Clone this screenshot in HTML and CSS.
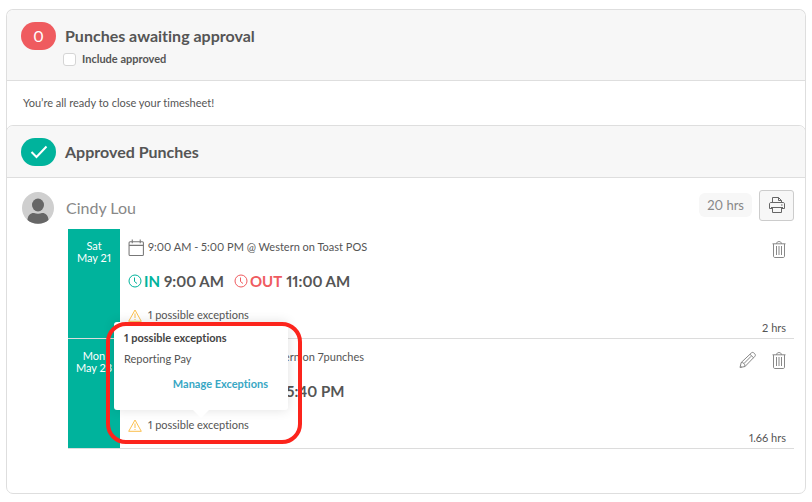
FILE: index.html
```html
<!DOCTYPE html>
<html lang="en">
<head>
  <meta charset="UTF-8" />
  <meta name="viewport" content="width=device-width, initial-scale=1" />
  <title>Timesheet approval</title>
  <link rel="stylesheet" href="styles.css">
</head>
<body>
  <!-- shared icons -->
  <svg class="sprite" aria-hidden="true">
    <symbol id="clock" viewBox="0 0 14 14">
      <circle cx="7" cy="7" r="6" />
      <path d="M6.5 3.5v4l2.5 2" />
    </symbol>
    <symbol id="calendar" viewBox="0 0 16 16">
      <rect x="1" y="2.5" width="13.5" height="13" rx="1" />
      <path d="M1 6h13.5M4 0.5v3.5M11.5 0.5v3.5" />
    </symbol>
    <symbol id="warning" viewBox="0 0 14 13">
      <path d="M7 1L13.3 12.3H0.7zM7 4.5v4.5M7 10v1" />
    </symbol>
    <symbol id="trash" viewBox="0 0 14 17">
      <path d="M0.5 2.8h13M4.5 2.8c0-3 5-3 5 0M1.5 3v12c0 1 .5 1.5 1.5 1.5h8c1 0 1.5-.5 1.5-1.5V3M4.5 5v9M7 5v9M9.5 5v9" />
    </symbol>
    <symbol id="pencil" viewBox="0 0 18 18">
      <path d="M1 16.5l1.2-5L12.5 1.8c1.5-1.5 5 1.8 3.5 3.4L6 15.5zM11 3.3l3.6 3.5M2.2 11.5c2-.3 4 1.5 3.8 4M12.2 5.2L5 12.5M1.3 15l1.5 1.2" />
    </symbol>
  </svg>

  <section class="card">
    <header class="card-head">
      <span class="count count-pending">0</span>
      <div>
        <h2>Punches awaiting approval</h2>
        <label class="include"><input type="checkbox"> Include approved</label>
      </div>
    </header>
    <p class="message">You’re all ready to close your timesheet!</p>
  </section>

  <section class="card card-approved">
    <header class="card-head">
      <span class="count count-done">
        <svg width="18" height="14" viewBox="0 0 18 14"><path d="M1.5 7L6.5 12L16.5 1.5" /></svg>
      </span>
      <h2>Approved Punches</h2>
    </header>

    <div class="employee">
      <svg class="avatar" viewBox="0 0 32 32">
        <circle cx="16" cy="16" r="16" fill="#cfcfcf" />
        <ellipse cx="16" cy="13" rx="6" ry="6.5" fill="#666" />
        <path d="M5.5 28c0-5 4-7.5 6.5-7 2.5 1 5.5 1 8 0 2.5-.5 6.5 2 6.5 7-5.5 5-15.5 5-21 0z" fill="#666" />
      </svg>
      <h3>Cindy Lou</h3>
      <div class="summary">
        <span class="total">20 hrs</span>
        <button class="print" type="button" aria-label="Print">
          <svg width="18" height="18" viewBox="0 0 18 18">
            <path d="M4.5 6.5V1.5h6l3 3v2M10.5 1.5v3h3M4 12.5H1.5V8c0-1 .5-1.5 1.5-1.5h12c1 0 1.5.5 1.5 1.5v4.500H14M4.500 11.500h9v5h-9zM3 11.500h12M13 9h1.500" />
          </svg>
        </button>
      </div>
    </div>

    <div class="punches">
      <article class="punch">
        <time class="day">Sat<br>May 21</time>
        <div class="details">
          <p class="shift"><svg class="icon-calendar"><use href="#calendar" /></svg>9:00 AM - 5:00 PM @ Western on Toast POS</p>
          <p class="times">
            <span class="in"><svg class="icon-clock"><use href="#clock" /></svg>IN</span> <span>9:00 AM</span>
            <span class="out"><svg class="icon-clock"><use href="#clock" /></svg>OUT</span> <span>11:00 AM</span>
          </p>
          <p class="exceptions"><svg class="icon-warning"><use href="#warning" /></svg>1 possible exceptions</p>
        </div>
        <div class="side">
          <div class="actions">
            <button type="button" aria-label="Delete punch"><svg class="icon-trash"><use href="#trash" /></svg></button>
          </div>
          <span>2 hrs</span>
        </div>
      </article>

      <article class="punch">
        <time class="day">Mon<br>May 23</time>
        <div class="details">
          <p class="shift"><svg class="icon-calendar"><use href="#calendar" /></svg>9:00 AM - 5:00 PM @ Western on 7punches</p>
          <p class="times">
            <span class="in"><svg class="icon-clock"><use href="#clock" /></svg>IN</span> <span>4:00 PM</span>
            <span class="out"><svg class="icon-clock"><use href="#clock" /></svg>OUT</span> <span>5:40 PM</span>
          </p>
          <p class="exceptions"><svg class="icon-warning"><use href="#warning" /></svg>1 possible exceptions</p>
          <div class="popover">
            <h4>1 possible exceptions</h4>
            <p>Reporting Pay</p>
            <a href="#">Manage Exceptions</a>
          </div>
          <div class="highlight"></div>
        </div>
        <div class="side">
          <div class="actions">
            <button type="button" aria-label="Edit punch"><svg class="icon-pencil"><use href="#pencil" /></svg></button>
            <button type="button" aria-label="Delete punch"><svg class="icon-trash"><use href="#trash" /></svg></button>
          </div>
          <span>1.66 hrs</span>
        </div>
      </article>
    </div>
  </section>
</body>
</html>
```

FILE: styles.css
```css
* {
  box-sizing: border-box;
}
body {
  margin: 9px 6px;
  background: #fff;
  color: #555;
  font-family: Lato, "Liberation Sans", sans-serif;
  font-size: 11px;
  line-height: 12px;
  font-variant-ligatures: none;
  font-variant-numeric: proportional-nums;
}
h2, h3, h4, p {
  margin: 0;
}
svg {
  fill: none;
  stroke: currentColor;
  flex: none;
}
button {
  padding: 0;
  border: 0;
  background: none;
  color: #888;
  font: inherit;
}
button svg {
  display: block;
}
.sprite {
  position: absolute;
  width: 0;
  height: 0;
}

/* cards */
.card {
  border: 1px solid #dedede;
  border-bottom: 0;
  border-radius: 7px 7px 0 0;
  padding-bottom: 7px;
}
.card-approved {
  margin-top: -7px;
  border-bottom: 1px solid #dedede;
  border-radius: 7px;
  padding-bottom: 44px;
}
.card-head {
  display: flex;
  align-items: flex-start;
  gap: 9px;
  padding: 12px 14px;
  border-bottom: 1px solid #dedede;
  border-radius: 7px 7px 0 0;
  background: #f7f7f7;
}
.card-head h2 {
  font-size: 16px;
  line-height: 28px;
  font-weight: 700;
}
.card-approved .card-head {
  padding-bottom: 11px;
}
.count {
  display: flex;
  align-items: center;
  justify-content: center;
  width: 35px;
  height: 28px;
  border-radius: 14px;
  color: #fff;
  font-size: 16px;
}
.count-pending {
  background: #ef5b5f;
}
.count-done {
  background: #00b39c;
}
.count-done svg {
  stroke-width: 2;
}
.include {
  display: flex;
  align-items: center;
  gap: 6px;
  height: 18px;
  font-weight: 700;
}
.include input {
  appearance: none;
  width: 13px;
  height: 13px;
  margin: 0 0 0 -2px;
  border: 1px solid #d5d5d5;
  border-radius: 3px;
  background: #fff;
}
.message {
  padding: 16px;
}

/* employee row */
.employee {
  display: flex;
  align-items: center;
  gap: 12px;
  padding: 14px 11px 5px 15px;
}
.avatar {
  width: 32px;
  height: 32px;
  stroke: none;
}
.employee h3 {
  flex: 1;
  color: #888;
  font-size: 16px;
  line-height: 20px;
  font-weight: 400;
}
.summary {
  display: flex;
  align-items: center;
  gap: 7px;
  height: 32px;
  margin: -3px 0 3px;
}
.total {
  padding: 5px 8px;
  border-radius: 6px;
  background: #f7f7f7;
  color: #888;
  font-size: 13px;
  line-height: 14px;
}
.print {
  display: flex;
  align-items: center;
  justify-content: center;
  width: 35px;
  height: 31px;
  border: 1px solid #ccc;
  border-radius: 3px;
  background: #f7f7f7;
  color: #666;
}

/* punches */
.punches {
  padding: 0 11px 0 61px;
}
.punch {
  display: flex;
  min-height: 110px;
  border-bottom: 1px solid #dcdcdc;
}
.day {
  width: 52px;
  padding-top: 11px;
  background: #00b39c;
  color: #fff;
  text-align: center;
}
.details {
  position: relative;
  flex: 1;
  padding: 9px 0 0 8px;
}
.shift {
  display: flex;
  align-items: center;
  gap: 3px;
  height: 18px;
}
.times {
  display: flex;
  align-items: center;
  gap: 4px;
  margin-top: 15px;
  font-size: 15px;
  line-height: 20px;
  font-weight: 700;
}
.in, .out {
  display: flex;
  align-items: center;
  gap: 2px;
}
.in {
  color: #00b39c;
}
.out {
  margin-left: 6px;
  color: #ef5b5f;
}
.exceptions {
  display: flex;
  align-items: center;
  gap: 6px;
  height: 18px;
  margin-top: 15px;
}
.icon-calendar {
  width: 17px;
  height: 17px;
  color: #777;
}
.icon-clock {
  width: 14px;
  height: 14px;
}
.icon-warning {
  width: 14px;
  height: 13px;
  color: #fbbf4d;
}
.icon-trash {
  width: 14px;
  height: 17px;
}
.icon-pencil {
  width: 18px;
  height: 18px;
}
.side {
  display: flex;
  flex-direction: column;
  justify-content: space-between;
  align-items: flex-end;
  padding: 12px 8px 4px 0;
}
.actions {
  display: flex;
  gap: 15px;
}

/* exceptions popover */
.popover {
  position: absolute;
  z-index: 1;
  left: -6px;
  bottom: 38px;
  width: 174px;
  height: 88px;
  padding: 10px 20px 0 10px;
  border-radius: 3px;
  background: #fff;
  box-shadow: 0 0 12px rgba(0, 0, 0, 0.12);
}
.popover::after {
  content: "";
  position: absolute;
  top: 100%;
  left: 50%;
  margin-left: -8px;
  border: 8px solid transparent;
  border-top-color: #fff;
  border-bottom: 0;
}
.popover h4 {
  color: #444;
  font-size: 11px;
}
.popover p {
  margin: 9px 0 13px;
}
.popover a {
  display: block;
  color: #38a7c4;
  font-weight: 700;
  text-align: right;
  text-decoration: none;
}
.highlight {
  position: absolute;
  z-index: 2;
  left: -14px;
  bottom: 4px;
  width: 196px;
  height: 122px;
  border: 4px solid #fc241c;
  border-radius: 20px;
  pointer-events: none;
}
```
